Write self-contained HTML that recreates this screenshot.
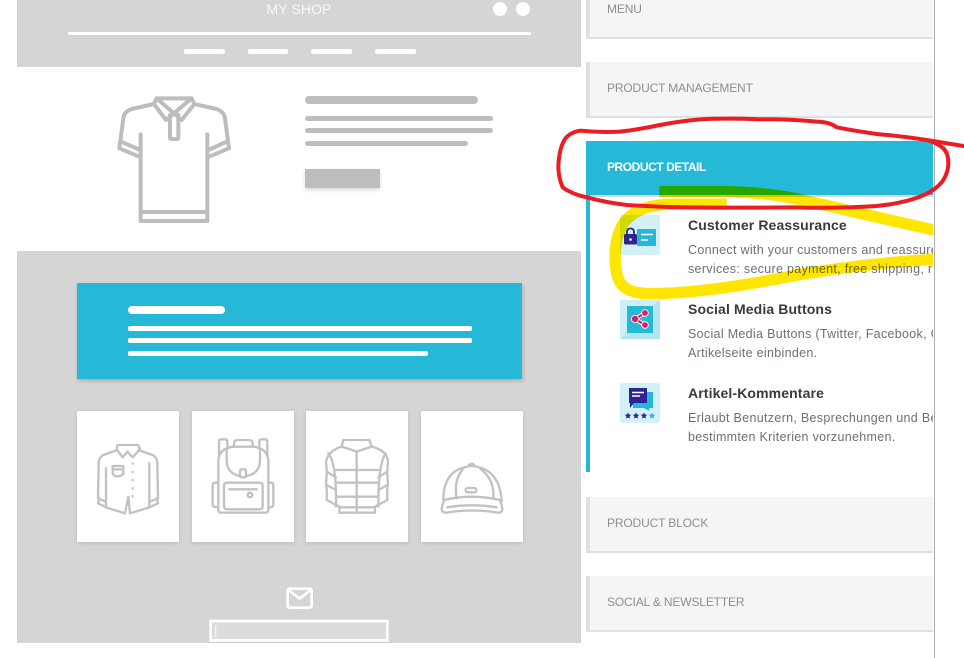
<!DOCTYPE html>
<html><head><meta charset="utf-8"><style>
html,body{margin:0;padding:0;background:#fff}
body{width:964px;height:658px;position:relative;overflow:hidden;font-family:"Liberation Sans",sans-serif}
.a{position:absolute}
.p{background:#d5d5d5;left:17px;width:564px}
.w{background:#fff;border-radius:2px}
.g{background:#bdbdbd;border-radius:3px}
.c{background:#fff;top:411px;height:131px;width:102px;box-shadow:0 1px 4px rgba(0,0,0,.13)}
.s{left:586px;width:343px;background:#f4f5f7;border-left:4px solid #e0e0e0;border-bottom:2px solid #e0e0e0}
.h{position:absolute;left:607px;font-size:12px;line-height:16px;color:#8e8e8e;white-space:nowrap;letter-spacing:-.15px}
.t{position:absolute;left:688px;width:245px;overflow:hidden;white-space:nowrap;font-size:14px;line-height:18px;font-weight:bold;color:#363a41;letter-spacing:.12px}
.d{position:absolute;left:688px;width:245px;overflow:hidden;white-space:nowrap;font-size:12.5px;line-height:18px;color:#6c6f75;letter-spacing:.31px}
svg{position:absolute;left:0;top:0}
</style></head><body>
<div class="a p" style="top:0;height:67px"></div>
<div class="a" style="left:199px;width:200px;top:1px;text-align:center;color:#f7f7f7;font-size:14px;line-height:17px;letter-spacing:.1px">MY SHOP</div>
<div class="a" style="left:493px;top:2px;width:14px;height:14px;border-radius:50%;background:#fff"></div>
<div class="a" style="left:516px;top:2px;width:14px;height:14px;border-radius:50%;background:#fff"></div>
<div class="a w" style="left:68px;top:32px;width:463px;height:3px"></div>
<div class="a w" style="left:184px;top:49px;width:41px;height:5px"></div>
<div class="a w" style="left:248px;top:49px;width:40px;height:5px"></div>
<div class="a w" style="left:311px;top:49px;width:41px;height:5px"></div>
<div class="a w" style="left:375px;top:49px;width:41px;height:5px"></div>

<div class="a g" style="left:305px;top:96px;width:173px;height:8px;border-radius:4px"></div>
<div class="a g" style="left:305px;top:115.500px;width:188px;height:5px"></div>
<div class="a g" style="left:305px;top:128px;width:188px;height:5px"></div>
<div class="a g" style="left:305px;top:141px;width:163px;height:5px"></div>
<div class="a" style="left:305px;top:169px;width:75px;height:19px;background:#bdbdbd;border-radius:1px;box-shadow:0 2px 4px rgba(0,0,0,.15)"></div>

<div class="a p" style="top:251px;height:392px"></div>
<div class="a" style="left:77px;top:283px;width:445px;height:96px;background:#25b9d7;box-shadow:1px 2px 4px rgba(0,0,0,.2)"></div>
<div class="a w" style="left:128px;top:306px;width:97px;height:8px;border-radius:4px"></div>
<div class="a w" style="left:128px;top:326px;width:344px;height:5px"></div>
<div class="a w" style="left:128px;top:338px;width:344px;height:5px"></div>
<div class="a w" style="left:128px;top:351px;width:300px;height:5px"></div>
<div class="a c" style="left:77px"></div>
<div class="a c" style="left:192px"></div>
<div class="a c" style="left:306px"></div>
<div class="a c" style="left:421px"></div>

<svg width="964" height="658" viewBox="0 0 964 658" fill="none" stroke-linecap="round" stroke-linejoin="round" style="filter:blur(.3px)">
<g transform="scale(.33333)" stroke="#bdbdbd" stroke-width="12">
<path d="M422 403V663H622V403M422 636H622"/>
<path d="M462 312L395 327Q372 335 370 355L358 445L418 470M364 425L420 450"/>
<path d="M582 312L650 327Q672 335 675 355L687 445L627 470M680 425L625 450"/>
<path d="M470 295H575L583 312L545 360L522 340L498 360L462 312ZM470 295L522 340L575 295"/>
<path d="M510 345V412Q510 417 515 417H530Q535 417 535 412V345"/>
</g>
<g transform="translate(70 400) scale(.33333)" stroke="#c2c2c2" stroke-width="7">
<path d="M142 150L100 165Q86 172 86 190L84 295L108 305M205 150L248 165Q262 172 262 190L264 295L238 305"/>
<path d="M88 295L84 310L108 322M260 295L264 310L238 322"/>
<path d="M108 205V322L165 340L175 290L180 340L238 322V190"/>
<path d="M142 135H205L210 148L188 172L172 155L158 172L140 148Z"/>
<path d="M128 198H160V222Q150 232 135 228L128 222ZM128 208H160"/>
<path d="M188 190V191M188 215V216M188 240V241M188 265V266M188 288V289"/>
<path d="M445 240V185Q445 145 490 140H550Q595 145 595 185V330Q595 338 585 338H455Q445 338 445 330Z"/>
<path d="M492 140V130Q492 120 505 120H535Q548 120 548 130V140"/>
<path d="M447 165V125Q447 118 455 118H465Q472 118 472 125V145M568 145V125Q568 118 575 118H585Q592 118 592 125V165"/>
<path d="M470 145V180Q470 220 510 228H530Q570 220 570 180V145"/>
<rect x="510" y="208" width="18" height="24" rx="5" fill="#fff"/>
<rect x="462" y="248" width="116" height="80" rx="8"/>
<path d="M478 268H560"/><circle cx="540" cy="285" r="7" fill="#fff"/>
<path d="M445 248H435Q428 248 428 258V315Q428 322 445 322M595 248H603Q610 248 610 258V315Q610 322 595 322"/>
</g>
<g transform="translate(300 400) scale(.33333)" stroke="#c2c2c2" stroke-width="7">
<path d="M130 120H208L215 140Q262 152 264 185Q260 215 264 250Q260 275 262 300L225 320V338H118V320L80 300Q82 275 78 250Q82 215 78 185Q85 152 125 140Z"/>
<path d="M125 140L170 155L215 140M170 155V338"/>
<path d="M108 210H235M108 248H235M108 290H235M118 322H225"/>
<path d="M85 160Q110 190 108 320M257 160Q235 190 235 320"/>
<path d="M80 215L108 232M80 255L108 270M262 215L235 232M262 255L235 270"/>
<path d="M430 300Q430 205 515 198Q600 205 605 305M505 198Q515 185 525 198"/>
<path d="M470 295Q460 240 490 205M580 295Q585 240 540 205"/>
<rect x="497" y="264" width="32" height="13" rx="6"/>
<path d="M432 300Q515 280 600 300L607 325Q607 338 595 338Q515 325 440 338Q425 338 425 325Z"/>
<path d="M442 322Q515 310 590 322"/>
</g>
<g transform="translate(190 570) scale(.33333)" stroke="#fff" stroke-width="8">
<rect x="293" y="56" width="72" height="57" rx="6"/>
<path d="M296 60L329 86L362 60"/>
<rect x="62" y="153" width="530" height="58" fill="#dcdcdc" stroke-linejoin="miter"/>
<path d="M77 167V198" stroke-width="3.500" stroke-opacity=".8"/>
</g>
</svg>

<div class="a s" style="top:-18px;height:55px"></div>
<div class="a s" style="top:62px;height:54px"></div>
<div class="a" style="left:586px;top:141px;width:347px;height:54px;background:#25b9d7"></div>
<div class="a" style="left:586px;top:195px;width:347px;height:2px;background:#d8d8d8"></div>
<div class="a" style="left:586px;top:195px;width:4px;height:277px;background:#25b9d7"></div>
<div class="a s" style="top:497px;height:54px"></div>
<div class="a s" style="top:576px;height:54px"></div>
<div class="a" style="left:934px;top:0;width:1px;height:658px;background:#adadad"></div>

<div class="h" style="top:1px">MENU</div>
<div class="h" style="top:80px">PRODUCT MANAGEMENT</div>
<div class="h" style="top:159px;color:#fff;font-weight:bold;letter-spacing:-.45px">PRODUCT DETAIL</div>
<div class="h" style="top:515px">PRODUCT BLOCK</div>
<div class="h" style="top:594px">SOCIAL &amp; NEWSLETTER</div>

<div class="t" style="top:216px">Customer Reassurance</div>
<div class="d" style="top:241px">Connect with your customers and reassure them about</div>
<div class="d" style="top:260px">services: secure payment, free shipping, returns</div>
<div class="t" style="top:300px">Social Media Buttons</div>
<div class="d" style="top:325px">Social Media Buttons (Twitter, Facebook, Google+) auf der</div>
<div class="d" style="top:344px">Artikelseite einbinden.</div>
<div class="t" style="top:384px">Artikel-Kommentare</div>
<div class="d" style="top:409px">Erlaubt Benutzern, Besprechungen und Bewertungen nach</div>
<div class="d" style="top:428px">bestimmten Kriterien vorzunehmen.</div>

<svg width="964" height="658" viewBox="0 0 964 658">
<rect x="620" y="215" width="40" height="40" rx="2" fill="#d2f0f6"/>
<rect x="637" y="229" width="19" height="17" rx="1" fill="#25b9d7"/>
<path d="M641 234.500H653M641 240H648" stroke="#fff" stroke-width="1.600" fill="none"/>
<path d="M627 235V232Q627 228.500 630.500 228.500Q634 228.500 634 232V235" stroke="#2e2391" stroke-width="1.800" fill="none"/>
<rect x="624" y="234" width="13" height="10.500" rx="1.500" fill="#2e2391"/>
<circle cx="630.500" cy="239.500" r="1.300" fill="#fff"/>

<rect x="620" y="300" width="40" height="39" rx="1" fill="#b2e5f0"/>
<path d="M620 300H660L653 306H627V333L620 339Z" fill="#cdeff6"/>
<rect x="627" y="306" width="26" height="27" fill="#25b9d7"/>
<path d="M645 313L635 319L645 325" stroke="#fff" stroke-width="4" fill="none"/>
<path d="M645 313L635 319L645 325" stroke="#e6185f" stroke-width="2.200" fill="none"/>
<g fill="#e6185f" stroke="#fff" stroke-width=".8"><circle cx="645" cy="313" r="3.300"/><circle cx="635" cy="319" r="3.600"/><circle cx="645" cy="325" r="3.300"/></g>

<rect x="620" y="383" width="40" height="40" rx="3" fill="#d2f0f6"/>
<path d="M633 392H653V408H649V411L644 408H633Z" fill="#25b9d7"/>
<path d="M629 388H647V403H634L630 408V403H629Z" fill="#2e2391"/>
<path d="M632 392.500H644M632 396H640" stroke="#fff" stroke-width="1.400" fill="none"/>
<path d="M628 412.500L629 414.500L631.200 414.800L629.600 416.300L630 418.500L628 417.500L626 418.500L626.400 416.300L624.800 414.800L627 414.500Z" fill="#2e2391"/>
<path d="M636 412.500L637 414.500L639.200 414.800L637.600 416.300L638 418.500L636 417.500L634 418.500L634.400 416.300L632.800 414.800L635 414.500Z" fill="#2e2391"/>
<path d="M644 412.500L645 414.500L647.200 414.800L645.600 416.300L646 418.500L644 417.500L642 418.500L642.400 416.300L640.800 414.800L643 414.500Z" fill="#2e2391"/>
<path d="M652 412.500L653 414.500L655.200 414.800L653.600 416.300L654 418.500L652 417.500L650 418.500L650.400 416.300L648.800 414.800L651 414.500Z" fill="#25b9d7"/>
</svg>

<div class="a" style="left:0;top:0;width:933px;height:658px;overflow:hidden;mix-blend-mode:multiply">
<svg width="964" height="658" viewBox="0 0 964 658" fill="none"><g transform="translate(560 110) scale(.33333)" stroke="#ffe600" stroke-width="34">
<path d="M298 245H500Q620 248 700 265Q820 290 900 310L1130 362"/>
<path d="M500 283H330Q230 285 190 340Q155 400 170 490Q180 545 250 550Q400 555 660 505Q880 462 1125 448" stroke-width="34"/>
</g></svg>
</div>
<svg width="964" height="658" viewBox="0 0 964 658" fill="none"><g transform="translate(560 110) scale(.33333)">
<path d="M1210 108L1100 90Q1020 78 950 72Q880 62 830 52Q810 36 770 35Q680 26 600 28Q500 24 420 28Q360 33 300 45Q240 58 180 65Q120 68 60 62Q25 68 12 92Q0 115 -3 145Q-10 190 8 232Q35 252 80 262Q140 278 200 285Q300 292 400 292Q550 294 700 292Q830 296 950 288Q1030 280 1080 260Q1130 240 1150 210Q1165 185 1165 160Q1165 130 1150 115Q1130 98 1100 90" stroke="#ec1c24" stroke-width="12" stroke-linecap="round" stroke-linejoin="round"/>
</g></svg>
</body></html>
